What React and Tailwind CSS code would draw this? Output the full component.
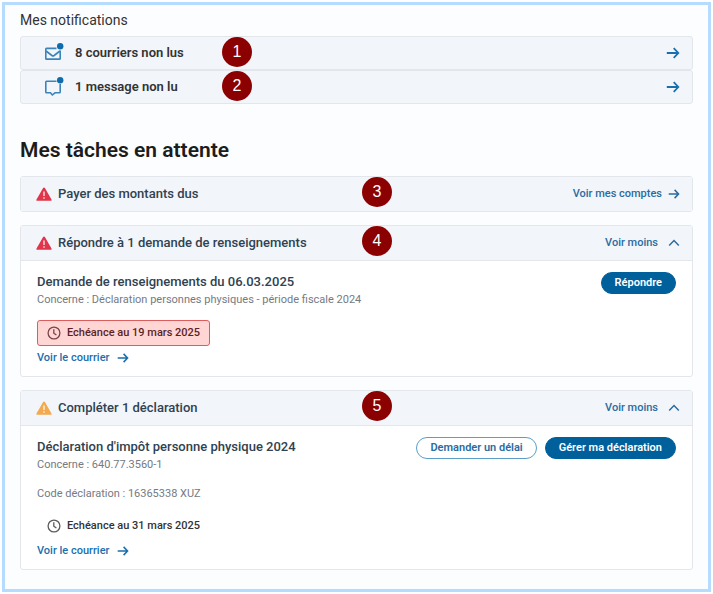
import { useState } from 'react';
import clsx from 'clsx';

const warningColors = {
  danger: 'text-[#e0354a]',
  warning: 'text-[#f2a94f]',
};

function ArrowIcon({ className }) {
  return (
    <svg viewBox="0 0 14 14" className={clsx('shrink-0', className)} fill="none" stroke="currentColor" strokeWidth="1.8" aria-hidden="true">
      <path d="M.8 7h11.400M7.700 2.200 12.300 7l-4.600 4.800" />
    </svg>
  );
}

function ChevronIcon({ open }) {
  return (
    <svg viewBox="0 0 12 12" className={clsx('size-3 shrink-0', !open && 'rotate-180')} fill="none" stroke="currentColor" strokeWidth="1.5" aria-hidden="true">
      <path d="m1.200 8.500 4.800-4.900 4.800 4.900" />
    </svg>
  );
}

function WarningIcon({ level }) {
  return (
    <svg viewBox="0 0 16 14" className={clsx('h-3.5 w-4 shrink-0', warningColors[level])} aria-hidden="true">
      <path fill="currentColor" d="M8 .4c.4 0 .7.2.9.5l6.600 11.500c.4.6 0 1.400-.8 1.400H1.300c-.8 0-1.200-.8-.8-1.400L7.100.9c.2-.3.5-.5.9-.5Z" />
      <path stroke="#fff" strokeOpacity="0.85" strokeWidth="1.4" d="M8 4.600v4.400M8 10.300v1.500" />
    </svg>
  );
}

function ClockIcon() {
  return (
    <svg viewBox="0 0 14 14" className="size-3.5 shrink-0 opacity-80" fill="none" stroke="currentColor" strokeWidth="1.3" aria-hidden="true">
      <circle cx="7" cy="7" r="5.900" />
      <path d="M6.800 3.200v4l2.600 1.900" />
    </svg>
  );
}

function MailIcon() {
  return (
    <svg viewBox="0 0 20 20" className="size-5 shrink-0" fill="none" stroke="#3b84bb" strokeWidth="1.6" aria-hidden="true">
      <path d="M12.500 5.400H2.500c-.4 0-.7.3-.7.7v9.300c0 .4.3.700.7.700h13c.4 0 .7-.3.700-.7V7.500" />
      <path d="m2 8 5.900 4.500c.7.5 1.500.5 2.200 0L16 8" />
      <circle cx="16.200" cy="3.200" r="3.200" fill="#0f6cab" stroke="none" />
    </svg>
  );
}

function MessageIcon() {
  return (
    <svg viewBox="0 0 20 20" className="size-5 shrink-0" fill="none" stroke="#3b84bb" strokeWidth="1.6" aria-hidden="true">
      <path d="M12.500 4.200H2.500c-.4 0-.7.3-.7.7v10.200c0 .4.3.700.7.700h4l1.800 2.200 2.700-2.200h4.500c.4 0 .7-.3.700-.7V7" />
      <circle cx="16.200" cy="3.200" r="3.200" fill="#0f6cab" stroke="none" />
    </svg>
  );
}

function StepBadge({ children, className }) {
  return (
    <span className={clsx('absolute top-0 flex size-[30px] items-center justify-center rounded-full bg-[#8b0000] font-[Liberation_Sans,sans-serif] text-base leading-5 text-white', className)}>
      {children}
    </span>
  );
}

function NotificationRow({ icon, label, step }) {
  return (
    <li>
      <a href="#" className="relative flex h-[34px] items-center gap-[11px] rounded-[3px] border border-[#e3e7eb] bg-[#f2f5fa] pr-3 pl-[23px]">
        {icon}
        <span className="flex-1 text-[13px] leading-4 font-semibold text-[#333]">{label}</span>
        <ArrowIcon className="size-3.5 text-[#1a6fad]" />
        <StepBadge className="left-[201px]">{step}</StepBadge>
      </a>
    </li>
  );
}

function TaskHeader({ level, title, step, children }) {
  return (
    <div className="relative flex h-[34px] items-center gap-1.5 bg-[#f2f5fa] pr-3 pl-[15px]">
      <WarningIcon level={level} />
      <h3 className="flex-1 text-[13px] leading-4 font-medium text-[#2f4250]">{title}</h3>
      {children}
      <StepBadge className="left-[341px]">{step}</StepBadge>
    </div>
  );
}

function TaskCard({ level, title, step, children }) {
  const [open, setOpen] = useState(true);

  return (
    <section className="rounded-[3px] border border-[#e3e7eb] bg-white">
      <TaskHeader level={level} title={title} step={step}>
        <button
          type="button"
          aria-expanded={open}
          onClick={() => setOpen((current) => !current)}
          className="flex items-center gap-2.5 text-[11px] leading-4 font-medium text-[#2b6c9f]"
        >
          Voir moins
          <ChevronIcon open={open} />
        </button>
      </TaskHeader>
      {open ? <div className="border-t border-[#e3e7eb] px-4 pt-[11px] pb-2.5">{children}</div> : null}
    </section>
  );
}

function PillButton({ variant = 'primary', children }) {
  return (
    <button
      type="button"
      className={clsx(
        'h-[22px] rounded-full border px-[13px] text-[11px] leading-4 font-semibold',
        variant === 'primary' ? 'border-[#00609c] bg-[#00609c] text-white' : 'border-[#5b9dc9] bg-white text-[#2b6c9f]'
      )}
    >
      {children}
    </button>
  );
}

function MailLink() {
  return (
    <a href="#" className="flex w-fit items-center gap-2 text-[11px] leading-4 font-medium text-[#1a6fad]">
      Voir le courrier
      <ArrowIcon className="size-3" />
    </a>
  );
}

function DueDate({ urgent, children }) {
  return (
    <p
      className={clsx(
        'mb-1 flex h-[26px] w-fit items-center gap-1.5 rounded-[3px] border px-[9px] text-[11px] leading-4 font-medium',
        urgent ? 'border-[#dd5c5c] bg-[#ffd6d4] text-[#5c1f24]' : 'border-transparent text-[#333]'
      )}
    >
      <ClockIcon />
      {children}
    </p>
  );
}

export default function App() {
  return (
    <div className="bg-white p-0.5 font-[Roboto,sans-serif]">
      <main className="border-[3px] border-[#b5dcff] bg-[#fcfdff] px-[15px] pt-[7px] pb-[19px]">
        <section>
          <h2 className="text-sm leading-4 text-[#333]">Mes notifications</h2>
          <ul className="mt-2">
            <NotificationRow icon={<MailIcon />} label="8 courriers non lus" step="1" />
            <NotificationRow icon={<MessageIcon />} label="1 message non lu" step="2" />
          </ul>
        </section>

        <h1 className="mt-8 text-[21px] leading-7 font-semibold text-[#1c1c1c]">Mes tâches en attente</h1>

        <div className="mt-3 flex flex-col gap-[13px]">
          <section className="rounded-[3px] border border-[#e3e7eb]">
            <TaskHeader level="danger" title="Payer des montants dus" step="3">
              <a href="#" className="flex items-center gap-1.5 text-[11px] leading-4 font-medium text-[#2b6c9f]">
                Voir mes comptes
                <ArrowIcon className="size-3" />
              </a>
            </TaskHeader>
          </section>

          <TaskCard level="danger" title="Répondre à 1 demande de renseignements" step="4">
            <div className="flex items-start justify-between">
              <div className="pt-0.5">
                <h4 className="text-[13px] leading-4 font-medium text-[#2f4250]">Demande de renseignements du 06.03.2025</h4>
                <p className="mt-0.5 text-[11px] leading-4 text-[#757a82]">Concerne : Déclaration personnes physiques - période fiscale 2024</p>
              </div>
              <PillButton>Répondre</PillButton>
            </div>
            <div className="mt-3">
              <DueDate urgent>Echéance au 19 mars 2025</DueDate>
            </div>
            <MailLink />
          </TaskCard>

          <TaskCard level="warning" title="Compléter 1 déclaration" step="5">
            <div className="flex items-start justify-between">
              <div className="pt-0.5">
                <h4 className="text-[13px] leading-4 font-medium text-[#2f4250]">Déclaration d'impôt personne physique 2024</h4>
                <p className="mt-0.5 text-[11px] leading-4 text-[#757a82]">Concerne : 640.77.3560-1</p>
                <p className="mt-[13px] text-[11px] leading-4 text-[#757a82]">Code déclaration : 16365338 XUZ</p>
              </div>
              <div className="flex gap-2">
                <PillButton variant="outline">Demander un délai</PillButton>
                <PillButton>Gérer ma déclaration</PillButton>
              </div>
            </div>
            <div className="mt-[11px]">
              <DueDate>Echéance au 31 mars 2025</DueDate>
            </div>
            <MailLink />
          </TaskCard>
        </div>
      </main>
    </div>
  );
}
